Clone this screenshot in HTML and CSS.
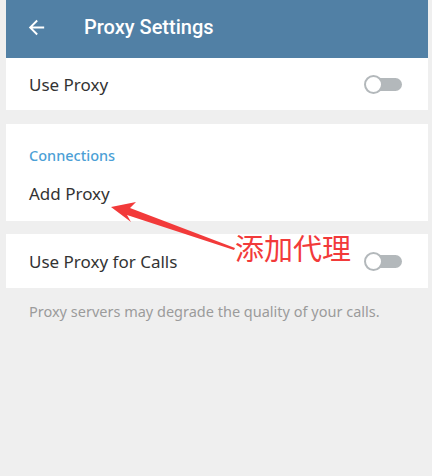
FILE: index.html
```html
<!DOCTYPE html>
<html>
<head>
<meta charset="utf-8">
<link rel="stylesheet" href="styles.css">
</head>
<body>
<div class="screen">
  <header class="topbar">
    <svg class="back" viewBox="0 0 24 24" width="24" height="24"><path d="M20 11H7.83l5.59-5.59L12 4l-8 8 8 8 1.41-1.41L7.83 13H20v-2z" fill="#fff"/></svg>
    <span class="title">Proxy Settings</span>
  </header>
  <section class="card card-1">
    <div class="row"><span class="label">Use Proxy</span><span class="toggle"><span class="knob"></span></span></div>
  </section>
  <section class="card card-2">
    <div class="section-title">Connections</div>
    <div class="row add"><span class="label">Add Proxy</span></div>
  </section>
  <section class="card card-3">
    <div class="row"><span class="label">Use Proxy for Calls</span><span class="toggle"><span class="knob"></span></span></div>
  </section>
  <p class="hint">Proxy servers may degrade the quality of your calls.</p>

  <svg class="annot-arrow" width="432" height="476" viewBox="0 0 432 476">
    <polygon points="111,207 136,202 130,208 235,248 234,250 127,215 131,222" fill="#f23a3a"/>
  </svg>
  <span class="annot-text">添加代理</span>
</div>
</body>
</html>
```
FILE: styles.css
```css
html, body {
  margin: 0;
  padding: 0;
  background: #efefef;
}
.screen {
  position: relative;
  width: 432px;
  height: 476px;
  padding: 0 4px 0 6px;
  box-sizing: border-box;
  font-family: "Noto Sans", Roboto, sans-serif;
}
.topbar {
  height: 58px;
  background: #5180a5;
  display: flex;
  align-items: center;
  color: #fff;
  padding-left: 19px;
  box-sizing: border-box;
  font-family: Roboto, sans-serif;
}
.back {
  width: 23px;
  height: 23px;
  margin-top: -3px;
}
.title {
  margin-left: 36px;
  font-size: 20px;
  font-weight: 500;
  margin-top: -4px;
}
.card {
  background: #fff;
}
.card-1 {
  height: 52px;
  display: flex;
  align-items: center;
}
.card-2 {
  margin-top: 14px;
  height: 97px;
  box-sizing: border-box;
  padding-top: 21px;
}
.card-3 {
  margin-top: 13px;
  height: 54px;
  display: flex;
  align-items: center;
}
.row {
  flex: 1;
  display: flex;
  align-items: center;
  justify-content: space-between;
  padding: 0 26px 0 23px;
}
.label {
  font-size: 17px;
  color: #333;
}
.section-title {
  padding-left: 23px;
  font-size: 14.5px;
  font-weight: 500;
  color: #4c9fd6;
  line-height: 20px;
}
.row.add {
  margin-top: 18px;
  line-height: 22px;
}
.toggle {
  position: relative;
  width: 37px;
  height: 13px;
  border-radius: 7px;
  background: #b3b8bb;
  margin-top: 1px;
}
.knob {
  position: absolute;
  left: 0;
  top: -3px;
  width: 15px;
  height: 15px;
  border: 2px solid #b3b8bb;
  border-radius: 50%;
  background: #fff;
  box-sizing: content-box;
  margin-left: -1px;
}
.hint {
  margin: 13px 0 0 23px;
  font-size: 14.5px;
  color: #9b9b9b;
}
.annot-arrow {
  position: absolute;
  left: 0;
  top: 0;
}
.annot-text {
  position: absolute;
  left: 235px;
  top: 228px;
  font-family: "Noto Sans CJK SC", sans-serif;
  font-size: 29px;
  line-height: 38px;
  color: #f23a3a;
}
```
